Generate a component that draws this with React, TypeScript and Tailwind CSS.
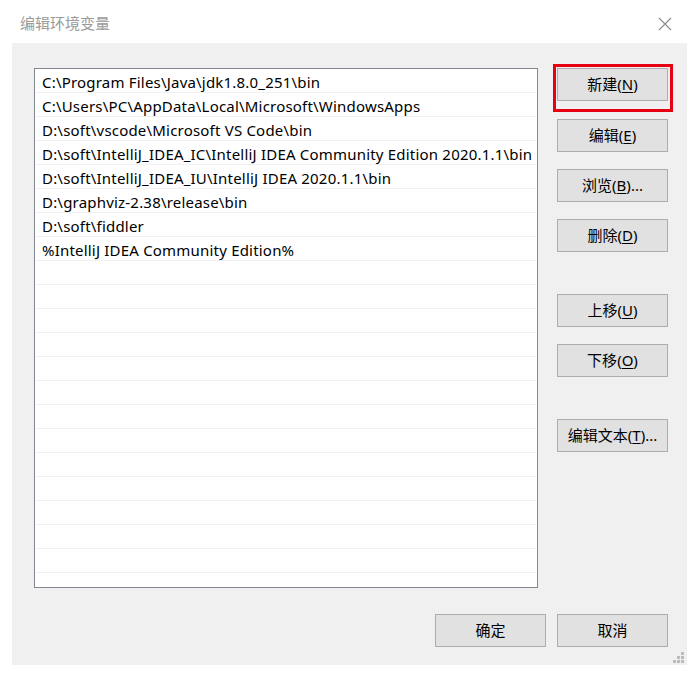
import React from 'react';

const paths = [
  'C:\\Program Files\\Java\\jdk1.8.0_251\\bin',
  'C:\\Users\\PC\\AppData\\Local\\Microsoft\\WindowsApps',
  'D:\\soft\\vscode\\Microsoft VS Code\\bin',
  'D:\\soft\\IntelliJ_IDEA_IC\\IntelliJ IDEA Community Edition 2020.1.1\\bin',
  'D:\\soft\\IntelliJ_IDEA_IU\\IntelliJ IDEA 2020.1.1\\bin',
  'D:\\graphviz-2.38\\release\\bin',
  'D:\\soft\\fiddler',
  '%IntelliJ IDEA Community Edition%',
];

const font = { fontFamily: '"Noto Sans", "Noto Sans CJK SC", sans-serif' };

function Btn({ label, hot, suffix, className = '' }: { label: string; hot?: string; suffix?: string; className?: string }) {
  return (
    <button
      className={`w-[111px] h-[33px] bg-[#e1e1e1] border border-[#adadad] text-[15px] text-black flex items-center justify-center leading-none ${className}`}
    >
      <span>{label}</span>
      {hot && (
        <span>
          (<span className="underline underline-offset-2">{hot}</span>){suffix}
        </span>
      )}
    </button>
  );
}

export default function App() {
  const rows = Array.from({ length: 21 }, (_, i) => paths[i] ?? '');

  return (
    <div className="w-[699px] h-[677px] bg-white relative" style={font}>
      {/* 标题栏 */}
      <div className="h-[43px] flex items-center justify-between pl-[20px] pr-[27px]">
        <span className="text-[15px] text-[#9a9a9a] pt-[4px]">编辑环境变量</span>
        <svg width="14" height="14" viewBox="0 0 14 14" className="mt-[4px]">
          <path d="M1 1 L13 13 M13 1 L1 13" stroke="#8a8a8a" strokeWidth="1.1" fill="none" />
        </svg>
      </div>

      <div className="mx-[12px] h-[622px] bg-[#f0f0f0] pt-[25px] pl-[22px] relative">
        <div className="flex">
          {/* 列表 */}
          <div className="w-[504px] h-[520px] bg-white border border-[#828790] overflow-hidden">
            {rows.map((p, i) => (
              <div key={i} className="h-[24px] mx-[1px] border-b border-[#f0f0f0] flex items-center pl-[6px] pt-[3px] text-[15px] tracking-[0.2px] text-black whitespace-nowrap leading-none">
                {p}
              </div>
            ))}
          </div>

          {/* 按钮列 */}
          <div className="ml-[19px] flex flex-col relative">
            <div className="absolute left-[-4px] top-[-4px] w-[120px] h-[48px] border-[3px] border-[#e60012]" />
            <Btn label="新建" hot="N" />
            <Btn label="编辑" hot="E" className="mt-[18px]" />
            <Btn label="浏览" hot="B" suffix="..." className="mt-[17px]" />
            <Btn label="删除" hot="D" className="mt-[17px]" />
            <Btn label="上移" hot="U" className="mt-[42px]" />
            <Btn label="下移" hot="O" className="mt-[17px]" />
            <Btn label="编辑文本" hot="T" suffix="..." className="mt-[42px]" />
          </div>
        </div>

        <div className="flex mt-[26px] pl-[401px] gap-[11px]">
          <Btn label="确定" />
          <Btn label="取消" />
        </div>

        {/* 调整大小手柄 */}
        <svg width="12" height="12" viewBox="0 0 12 12" className="absolute right-[2px] bottom-[1px]">
          <rect x="8" y="0" width="3" height="3" fill="#bcbcbc" />
          <rect x="4" y="4" width="3" height="3" fill="#bcbcbc" />
          <rect x="8" y="4" width="3" height="3" fill="#bcbcbc" />
          <rect x="0" y="8" width="3" height="3" fill="#bcbcbc" />
          <rect x="4" y="8" width="3" height="3" fill="#bcbcbc" />
          <rect x="8" y="8" width="3" height="3" fill="#bcbcbc" />
        </svg>
      </div>
    </div>
  );
}
